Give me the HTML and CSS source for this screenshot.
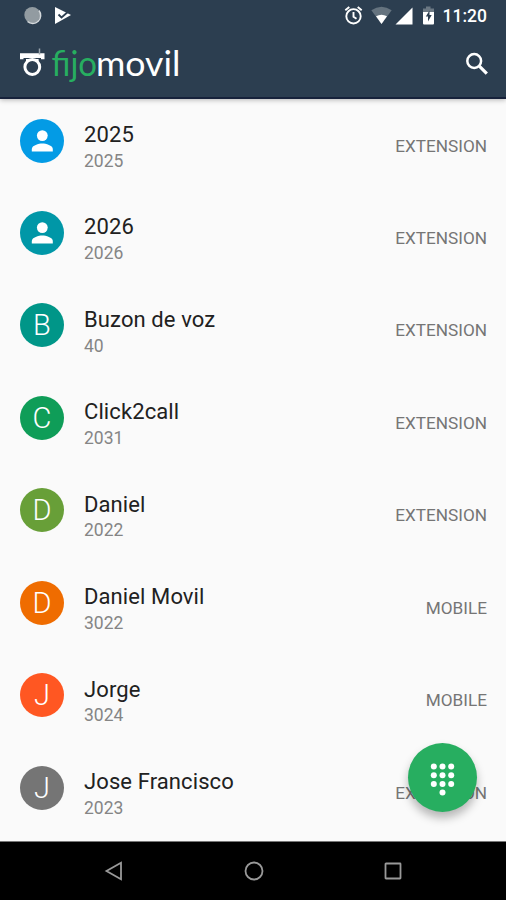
FILE: index.html
```html
<!DOCTYPE html>
<html lang="es">
<head>
<meta charset="utf-8">
<title>fijomovil</title>
<link rel="stylesheet" href="styles.css">
</head>
<body>
<div class="phone">
  <header class="header">
    <div class="status">
      <svg class="status-left" width="60" height="32" viewBox="0 0 60 32">
        <circle cx="12.3" cy="15" r="8" fill="#929ba1"/>
        <path d="M19 10.5a8 8 0 0 1-11.500 11" fill="none" stroke="#d5d9dc" stroke-width="1.500"/>
        <path d="M35 7l16 8-16 9z" fill="#fff"/>
        <path d="M38.500 14.500l3 3 8-7" fill="none" stroke="#2c3e50" stroke-width="1.800"/>
      </svg>
      <svg class="status-right" width="96" height="32" viewBox="0 0 96 32">
        <g fill="none" stroke="#fff" stroke-width="1.900">
          <circle cx="14.500" cy="16.300" r="7.200"/>
          <path d="M14.500 12v4.700l3 2M6.300 10.200l4-3.300M22.700 10.200l-4-3.300"/>
        </g>
        <path d="M32.300 10.200q10.200-7 20.400 0L42.500 24z" fill="#65737f"/>
        <path d="M37 16.300q5.500-3 11 0L42.500 24z" fill="#fff"/>
        <path d="M56.500 24.500L73.500 7.500v17z" fill="#fff"/>
        <path d="M87 6.500h4.500v2H95v4H84v-4h3z" fill="#6b7883"/>
        <path d="M84 12h11v11.500q0 1-1 1H85q-1 0-1-1z" fill="#fff"/>
        <path d="M90.500 10.500l-3.700 6h2.200v5l3.700-6.500h-2.200z" fill="#2c3e50"/>
      </svg>
      <span class="time">11:20</span>
    </div>
    <div class="toolbar">
      <svg class="logo" width="170" height="44" viewBox="0 0 170 44">
        <path d="M0 9.300h24.500v6h-3.500V14H3.500v1.300H0z" fill="#fff"/>
        <path d="M19.500 4.500v6" stroke="#9aa5ae" stroke-width="1.500"/>
        <circle cx="12.300" cy="23" r="7.400" fill="none" stroke="#fff" stroke-width="3"/>
        <path d="M6 16h12.600" stroke="#fff" stroke-width="2"/>
        <text class="logo-text logo-fijo" x="31.500" y="31.800" textLength="45.500" lengthAdjust="spacingAndGlyphs">fijo</text>
        <text class="logo-text logo-movil" x="76" y="31.800" textLength="84.500" lengthAdjust="spacingAndGlyphs">movil</text>
      </svg>
      <svg class="search" width="30" height="30" viewBox="0 0 30 30">
        <circle cx="11.200" cy="12" r="6.900" fill="none" stroke="#fff" stroke-width="2.500"/>
        <path d="M16.300 17.100l7.500 7.500" stroke="#fff" stroke-width="3.200"/>
      </svg>
    </div>
  </header>

  <main class="list">
    <div class="row"><div class="avatar blue"><svg width="44" height="44" viewBox="0 0 44 44"><circle cx="22.300" cy="16.600" r="5.400"/><path d="M11.800 32.500v-2.500c0-3.600 7-5.500 10.500-5.500s10.500 1.900 10.500 5.500v2.500z"/></svg></div><div class="who"><div class="name">2025</div><div class="number">2025</div></div><div class="kind">EXTENSION</div></div>
    <div class="row"><div class="avatar cyan"><svg width="44" height="44" viewBox="0 0 44 44"><circle cx="22.300" cy="16.600" r="5.400"/><path d="M11.800 32.500v-2.500c0-3.600 7-5.500 10.500-5.500s10.500 1.900 10.500 5.500v2.500z"/></svg></div><div class="who"><div class="name">2026</div><div class="number">2026</div></div><div class="kind">EXTENSION</div></div>
    <div class="row"><div class="avatar teal">B</div><div class="who"><div class="name">Buzon de voz</div><div class="number">40</div></div><div class="kind">EXTENSION</div></div>
    <div class="row"><div class="avatar green">C</div><div class="who"><div class="name">Click2call</div><div class="number">2031</div></div><div class="kind">EXTENSION</div></div>
    <div class="row"><div class="avatar lime">D</div><div class="who"><div class="name">Daniel</div><div class="number">2022</div></div><div class="kind">EXTENSION</div></div>
    <div class="row"><div class="avatar orange">D</div><div class="who"><div class="name">Daniel Movil</div><div class="number">3022</div></div><div class="kind">MOBILE</div></div>
    <div class="row"><div class="avatar red">J</div><div class="who"><div class="name">Jorge</div><div class="number">3024</div></div><div class="kind">MOBILE</div></div>
    <div class="row"><div class="avatar grey">J</div><div class="who"><div class="name">Jose Francisco</div><div class="number">2023</div></div><div class="kind">EXTENSION</div></div>
  </main>

  <div class="fab">
    <svg width="69" height="69" viewBox="0.5 0.5 69 69" fill="#fff">
      <circle cx="26.300" cy="24" r="3"/><circle cx="35" cy="24" r="3"/><circle cx="43.700" cy="24" r="3"/>
      <circle cx="26.300" cy="32.700" r="3"/><circle cx="35" cy="32.700" r="3"/><circle cx="43.700" cy="32.700" r="3"/>
      <circle cx="26.300" cy="41.400" r="3"/><circle cx="35" cy="41.400" r="3"/><circle cx="43.700" cy="41.400" r="3"/>
      <circle cx="35" cy="50.100" r="3"/>
    </svg>
  </div>

  <nav class="nav">
    <svg width="20" height="20" viewBox="0 0 20 20"><path d="M17 1.800v16.400L2.500 10z"/></svg>
    <svg width="20" height="20" viewBox="0 0 20 20"><circle cx="10" cy="10" r="8.500"/></svg>
    <svg width="20" height="20" viewBox="0 0 20 20"><rect x="2.500" y="2.500" width="15" height="15" rx=".5"/></svg>
  </nav>
</div>
</body>
</html>
```
FILE: styles.css
```css
* { box-sizing: border-box; }
body { margin: 0; font-family: Roboto, "Liberation Sans", sans-serif; background: #fafafa; }
svg { display: block; flex: none; }
.phone { position: relative; display: flex; flex-direction: column; width: 506px; height: 900px; overflow: hidden; }
.header { flex: none; height: 99px; background: #2c3e50; border-bottom: 2px solid #17223b; box-shadow: 0 1px 5px rgba(0, 0, 0, .28); z-index: 1; }
.status { display: flex; height: 32px; padding: 0 19px 0 20px; }
.status-right { margin-left: auto; }
.time { width: 45px; margin-left: 7px; color: #fff; font-size: 17.5px; font-weight: 500; line-height: 32px; text-align: right; white-space: nowrap; }
.status-right, .time { flex: none; }
.toolbar { display: flex; justify-content: space-between; align-items: center; height: 64px; padding: 0 13px 0 20px; }
.logo { margin-top: 4px; overflow: visible; }
.logo-text { font-family: Lato, "Liberation Sans", sans-serif; font-size: 35px; }
.logo-fijo { fill: #27ae60; }
.logo-movil { fill: #fff; }
.search { margin-top: 0; }
.list { flex: 1; min-height: 0; overflow: hidden; padding-top: 1px; }
.row { display: flex; height: 92.45px; padding: 18.500px 19px 0 20px; }
.avatar { display: flex; flex: none; align-items: center; justify-content: center; width: 44px; height: 44px; border-radius: 50%; color: #fff; font-size: 29px; font-weight: 300; line-height: 44px; }
.avatar svg { fill: #fff; }
.blue { background: #039be5; }
.cyan { background: #0097a7; }
.teal { background: #009688; }
.green { background: #0f9d58; }
.lime { background: #689f38; }
.orange { background: #ef6c00; }
.red { background: #ff5722; }
.grey { background: #757575; }
.who { flex: 1; margin-left: 20px; }
.name { margin-top: 3.5px; color: #212121; font-size: 22px; line-height: 26px; letter-spacing: .1px; white-space: nowrap; }
.number { margin-top: 2.7px; color: #858585; font-size: 17.5px; line-height: 20px; }
.kind { margin-top: 17px; color: #757575; font-size: 17.2px; line-height: 20px; }
.fab { position: absolute; left: 408px; top: 742.5px; width: 69px; height: 69px; border-radius: 50%; background: #27ae60; box-shadow: 0 6px 10px rgba(0, 0, 0, .28); z-index: 2; }
.nav { display: flex; flex: none; justify-content: space-between; align-items: center; height: 59px; padding: 0 103px 0 104px; border-top: 1px solid #777; background: #000; }
.nav svg { fill: none; stroke: #999; stroke-width: 1.800; }
```
